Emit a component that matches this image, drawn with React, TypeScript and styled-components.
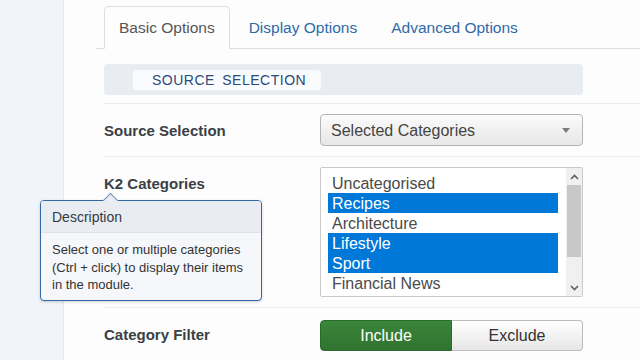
import React from 'react';
import styled, { createGlobalStyle } from 'styled-components';

const GlobalStyle = createGlobalStyle`
  html, body {
    margin: 0;
    padding: 0;
    background: #fdfdfd;
    font-family: "Liberation Sans", Arial, sans-serif;
  }
  * { box-sizing: border-box; }
`;

const Page = styled.div`
  display: flex;
  width: 640px;
  height: 360px;
  overflow: hidden;
`;

const Sidebar = styled.div`
  width: 64px;
  flex-shrink: 0;
  background: #f1f4f8;
  border-right: 1px solid #e3e7ec;
`;

const Main = styled.div`
  flex: 1;
  padding: 6px 0 0 32px;
  background: #fdfdfd;
`;

const TabBar = styled.div`
  display: flex;
  padding-left: 8px;
  border-bottom: 1px solid #dddddd;
`;

const Tab = styled.div<{ $active?: boolean }>`
  height: 43px;
  line-height: 42px;
  padding: 0 14px;
  margin-right: 4px;
  margin-bottom: -1px;
  font-size: 15.5px;
  border: 1px solid ${(p) => (p.$active ? '#dddddd' : 'transparent')};
  border-bottom-color: ${(p) => (p.$active ? '#fdfdfd' : 'transparent')};
  border-radius: 5px 5px 0 0;
  background: ${(p) => (p.$active ? '#fdfdfd' : 'transparent')};
  color: ${(p) => (p.$active ? '#555555' : '#2f6aa8')};
`;

const Content = styled.div`
  padding: 15px 0 0 8px;
`;

const SectionHeader = styled.div`
  width: 479px;
  height: 31px;
  padding: 6px 0 0 29px;
  margin-bottom: 8px;
  background: #e9edf2;
  border-radius: 4px;
`;

const SectionLabel = styled.div`
  display: inline-block;
  width: 188px;
  height: 20px;
  line-height: 21px;
  padding: 0 0 0 19px;
  background: #fafbfc;
  border-radius: 3px;
  color: #2b4a7d;
  font-size: 14px;
  letter-spacing: 0.5px;
  word-spacing: 3px;
  white-space: nowrap;
`;

const Row = styled.div<{ $padTop?: number }>`
  display: flex;
  align-items: flex-start;
  padding: ${(p) => p.$padTop ?? 10}px 0 10px;
  border-top: 1px solid #ececec;
`;

const LabelCell = styled.div`
  position: relative;
  width: 216px;
  flex-shrink: 0;
`;

const Label = styled.div`
  height: 32px;
  line-height: 33px;
  font-size: 15px;
  font-weight: bold;
  color: #3b3f46;
`;

const Select = styled.div`
  position: relative;
  width: 263px;
  height: 32px;
  line-height: 31px;
  padding-left: 10px;
  border: 1px solid #b4b4b4;
  border-radius: 4px;
  background: linear-gradient(#fbfbfb, #e7e7e7);
  font-size: 16px;
  color: #444444;
`;

const Caret = styled.span`
  position: absolute;
  right: 12px;
  top: 13px;
  width: 0;
  height: 0;
  border-left: 4px solid transparent;
  border-right: 4px solid transparent;
  border-top: 5px solid #7b7b7b;
`;

const ListBox = styled.div`
  display: flex;
  width: 263px;
  height: 130px;
  border: 1px solid #c9c9c9;
  border-radius: 2px;
  background: #ffffff;
`;

const Options = styled.div`
  flex: 1;
  padding: 5px 8px 0 7px;
`;

const Option = styled.div<{ $selected?: boolean }>`
  height: 20px;
  line-height: 21px;
  padding-left: 4px;
  font-size: 16px;
  color: ${(p) => (p.$selected ? '#ffffff' : '#4a4a4a')};
  background: ${(p) => (p.$selected ? '#0078d7' : 'transparent')};
`;

const ScrollBar = styled.div`
  display: flex;
  flex-direction: column;
  width: 16px;
  background: #f0f0f0;
`;

const ScrollArrow = styled.div`
  display: flex;
  align-items: center;
  justify-content: center;
  height: 17px;
`;

const ScrollTrack = styled.div`
  flex: 1;
`;

const Thumb = styled.div`
  margin: 0 1px;
  height: 72px;
  background: #c8c8c8;
`;

const ButtonGroup = styled.div`
  display: flex;
  width: 263px;
  height: 31px;
  margin-top: 2px;
`;

const ToggleButton = styled.div<{ $on?: boolean }>`
  flex: 1;
  display: flex;
  align-items: center;
  justify-content: center;
  font-size: 16px;
  color: ${(p) => (p.$on ? '#ffffff' : '#333333')};
  background: ${(p) => (p.$on ? 'linear-gradient(#3b853a, #2f7430)' : 'linear-gradient(#ffffff, #e6e6e6)')};
  border: 1px solid ${(p) => (p.$on ? '#2b6a2b' : '#bdbdbd')};
  border-radius: ${(p) => (p.$on ? '4px 0 0 4px' : '0 4px 4px 0')};
  border-left-width: ${(p) => (p.$on ? '1px' : '0')};
`;

const Tooltip = styled.div`
  position: absolute;
  left: -64px;
  top: 33px;
  width: 222px;
  border: 1px solid #3269a2;
  border-radius: 4px;
  background: #f5f7fb;
  box-shadow: 0 1px 3px rgba(0, 0, 0, 0.18);
  z-index: 5;
`;

const TooltipArrow = styled.span`
  position: absolute;
  left: 64px;
  top: -6px;
  width: 11px;
  height: 11px;
  background: #e9edf2;
  border-left: 1px solid #6f8fb4;
  border-top: 1px solid #6f8fb4;
  transform: rotate(45deg);
`;

const TooltipHeader = styled.div`
  position: relative;
  height: 32px;
  line-height: 33px;
  padding-left: 11px;
  background: #e9edf2;
  border-bottom: 1px solid #dde2e8;
  border-radius: 3px 3px 0 0;
  font-size: 14px;
  color: #333a44;
`;

const TooltipBody = styled.div`
  padding: 8px 11px 6px;
  font-size: 13px;
  line-height: 17.5px;
  color: #333333;
`;

const Chevron: React.FC<{ up?: boolean }> = ({ up }) => (
  <svg width="9" height="6" viewBox="0 0 9 6">
    <path
      d={up ? 'M1 5 L4.5 1.5 L8 5' : 'M1 1 L4.5 4.5 L8 1'}
      fill="none"
      stroke="#606060"
      strokeWidth="1.6"
    />
  </svg>
);

const categories = [
  { name: 'Uncategorised', selected: false },
  { name: 'Recipes', selected: true },
  { name: 'Architecture', selected: false },
  { name: 'Lifestyle', selected: true },
  { name: 'Sport', selected: true },
  { name: 'Financial News', selected: false },
];

const App: React.FC = () => {
  return (
    <>
      <GlobalStyle />
      <Page>
        <Sidebar />
        <Main>
          <TabBar>
            <Tab $active>Basic Options</Tab>
            <Tab>Display Options</Tab>
            <Tab>Advanced Options</Tab>
          </TabBar>
          <Content>
            <SectionHeader>
              <SectionLabel>SOURCE SELECTION</SectionLabel>
            </SectionHeader>

            <Row>
              <LabelCell>
                <Label>Source Selection</Label>
              </LabelCell>
              <Select>
                Selected Categories
                <Caret />
              </Select>
            </Row>

            <Row>
              <LabelCell>
                <Label>K2 Categories</Label>
                <Tooltip>
                  <TooltipArrow />
                  <TooltipHeader>Description</TooltipHeader>
                  <TooltipBody>
                    Select one or multiple categories (Ctrl + click) to display their items in the module.
                  </TooltipBody>
                </Tooltip>
              </LabelCell>
              <ListBox>
                <Options>
                  {categories.map((c) => (
                    <Option key={c.name} $selected={c.selected}>
                      {c.name}
                    </Option>
                  ))}
                </Options>
                <ScrollBar>
                  <ScrollArrow>
                    <Chevron up />
                  </ScrollArrow>
                  <ScrollTrack>
                    <Thumb />
                  </ScrollTrack>
                  <ScrollArrow>
                    <Chevron />
                  </ScrollArrow>
                </ScrollBar>
              </ListBox>
            </Row>

            <Row $padTop={10}>
              <LabelCell>
                <Label>Category Filter</Label>
              </LabelCell>
              <ButtonGroup>
                <ToggleButton $on>Include</ToggleButton>
                <ToggleButton>Exclude</ToggleButton>
              </ButtonGroup>
            </Row>
          </Content>
        </Main>
      </Page>
    </>
  );
};

export default App;
